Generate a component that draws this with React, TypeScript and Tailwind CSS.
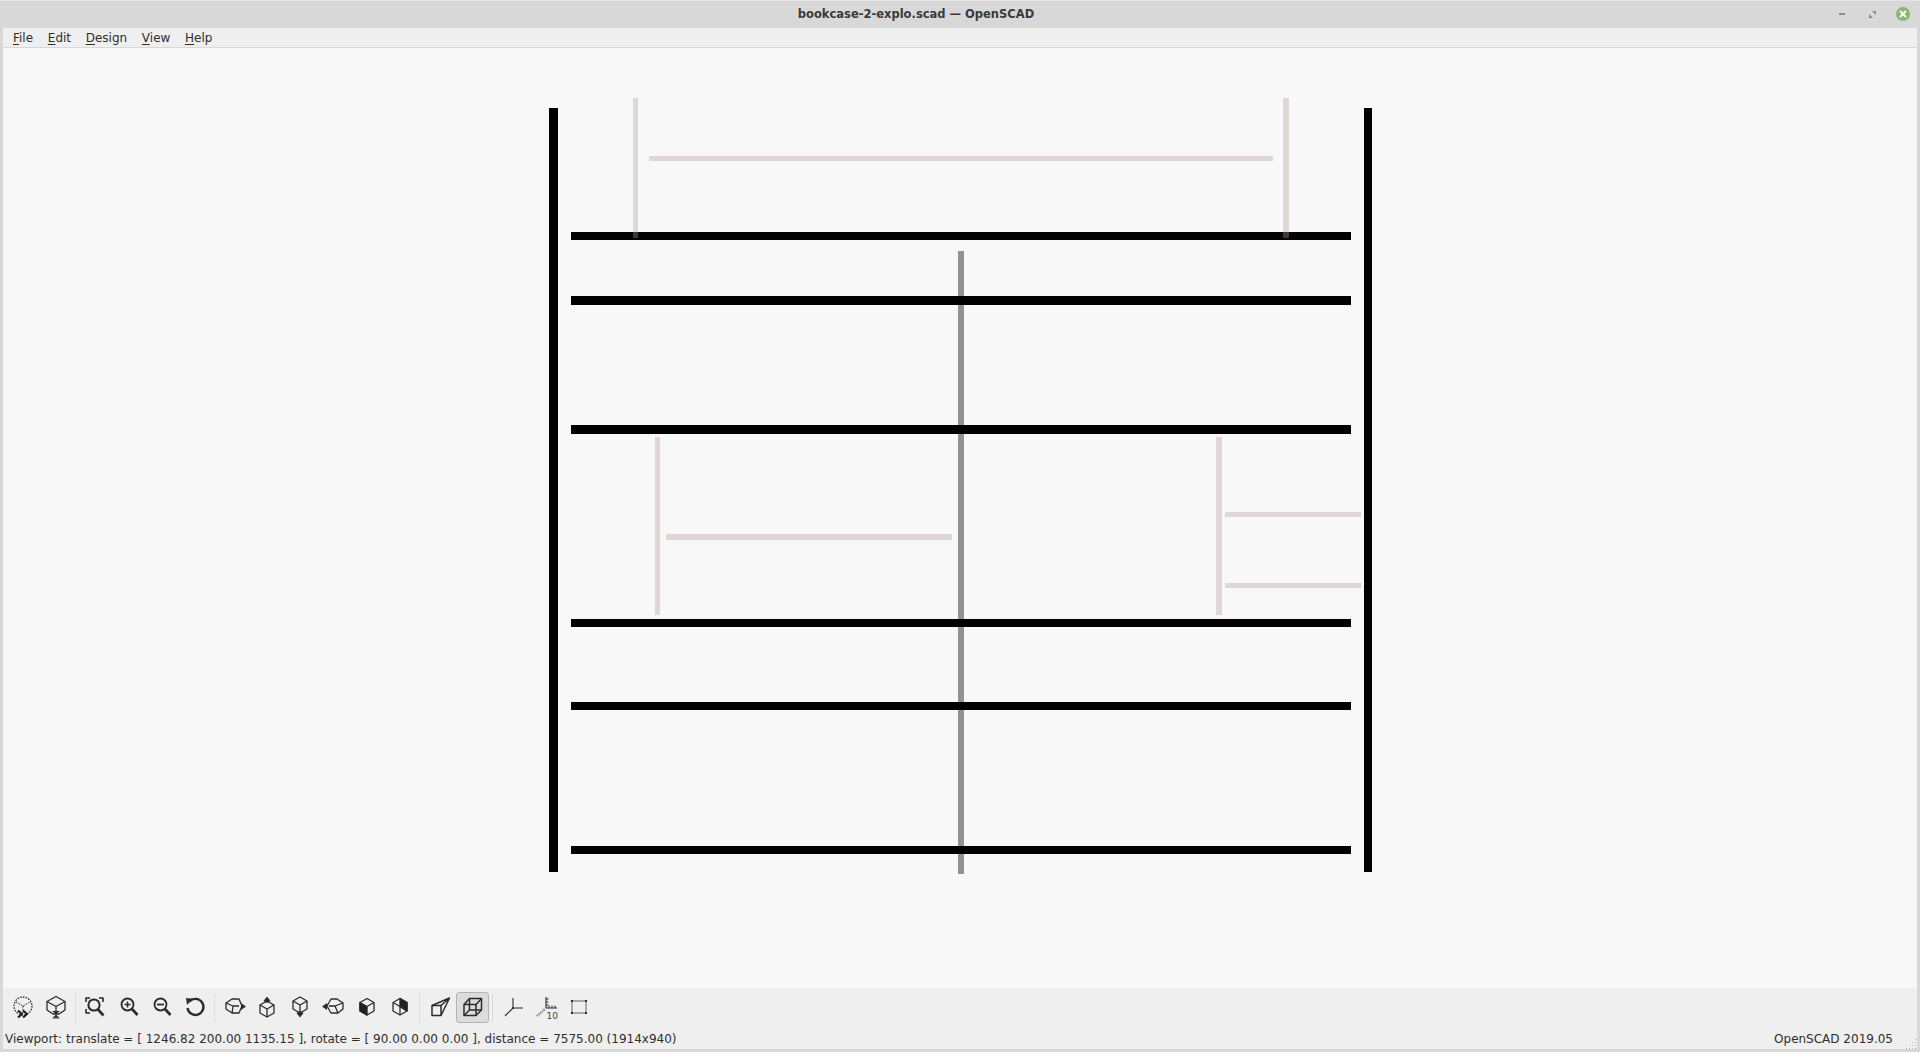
import type { ReactNode } from "react"

const font = "font-['DejaVu_Sans',sans-serif]"
const ink = "#2b2b2b"

const menus = [
  ["F", "ile"],
  ["E", "dit"],
  ["D", "esign"],
  ["V", "iew"],
  ["H", "elp"],
]

// rects of the model, in window coordinates
const parts = {
  grey: [[958, 251, 6, 623]],
  pink: [
    [633, 98, 5, 140],
    [1283, 98, 6, 140],
    [649, 156, 624, 5],
    [655, 437, 5, 178],
    [666, 534, 286, 6],
    [1216, 437, 6, 178],
    [1225, 512, 136, 5],
    [1225, 583, 136, 5],
  ],
  black: [
    [549, 108, 9, 764],
    [1364, 108, 8, 764],
    [571, 232, 780, 8],
    [571, 296, 780, 9],
    [571, 425, 780, 9],
    [571, 619, 780, 8],
    [571, 702, 780, 8],
    [571, 846, 780, 8],
  ],
  overlap: [
    [633, 232, 5, 6],
    [1283, 232, 6, 6],
  ],
}

function Rects({ items, fill }: { items: number[][]; fill: string }) {
  return (
    <>
      {items.map(([x, y, w, h]) => (
        <rect key={`${x}-${y}`} x={x} y={y} width={w} height={h} fill={fill} />
      ))}
    </>
  )
}

function Icon({ children }: { children: ReactNode }) {
  return (
    <svg width="24" height="24" viewBox="0 0 24 24" fill="none" stroke={ink} strokeWidth="1.3" strokeLinejoin="round">
      {children}
    </svg>
  )
}

const cube = "M12 3.5 19 7.5V16L12 20 5 16V7.5Z"

const icons: Record<string, ReactNode> = {
  preview: (
    <>
      <circle cx="12" cy="11" r="9" strokeDasharray="1.6 1.2" />
      <path d="M5 7 12 11 19 7M12 11V19" strokeDasharray="1.6 1.2" strokeWidth="1" />
      <path d="M7 15.5 11 19 7 22.5M12 15.5 16 19 12 22.5" strokeWidth="2.2" stroke="#222" />
    </>
  ),
  render: (
    <>
      <path d="M12 1.5 21 6.5V15L15 19H9L3 15V6.5Z" />
      <path d="M3 6.5 12 11.5 21 6.5M12 11.5V17" />
      <path d="M9 16.5H15L12 19.5 15 22.5H9L12 19.5Z" fill={ink} stroke="none" />
      <path d="M8.5 16.5H15.5M8.5 23H15.5" strokeWidth="1.2" />
    </>
  ),
  zoomAll: (
    <g transform="translate(-1 0)">
      <circle cx="11" cy="10" r="5.6" strokeWidth="2" />
      <path d="M15 14.5 20.5 20.5" strokeWidth="2.6" />
      <path d="M3 7V3H7M16 3H20V7M3 14V18H7" strokeWidth="1.6" />
    </g>
  ),
  zoomIn: (
    <>
      <circle cx="10.5" cy="9.5" r="6" strokeWidth="1.8" />
      <path d="M15 14 20.5 20" strokeWidth="2.6" />
      <path d="M7.5 9.5H13.5M10.5 6.5V12.5" strokeWidth="1.5" />
    </>
  ),
  zoomOut: (
    <>
      <circle cx="10.5" cy="9.5" r="6" strokeWidth="1.8" />
      <path d="M15 14 20.5 20" strokeWidth="2.6" />
      <path d="M7 9.5H14" strokeWidth="1.8" />
    </>
  ),
  reset: (
    <>
      <path d="M6.5 6.5A8 8 0 1 1 4.5 13" strokeWidth="2.4" />
      <path d="M3 3 10 3.8 4 10Z" fill={ink} stroke="none" />
    </>
  ),
  right: (
    <g transform="translate(-1 0)">
      <path d="M10 4H17L20 11 17 18H10L4 14V8Z" />
      <path d="M4 8 11 11 10 18M11 11H17" />
      <path d="M19 8 24 11.5 19 15Z" fill={ink} stroke="none" />
    </g>
  ),
  top: (
    <g transform="translate(-1 0)">
      <path d="M12 6 19 10V18L12 22 5 18V10Z" />
      <path d="M5 10 12 14 19 10M12 14V22" />
      <path d="M8.5 6 12 1.5 15.5 6 12 8Z" fill={ink} stroke="none" />
    </g>
  ),
  bottom: (
    <g transform="translate(-1 0)">
      <path d="M12 2 19 6V14L12 18 5 14V6Z" />
      <path d="M5 6 12 10 19 6M12 10V18" />
      <path d="M8.5 18 12 22.5 15.5 18 12 16Z" fill={ink} stroke="none" />
    </g>
  ),
  left: (
    <>
      <path d="M14 4H8L4 11 8 18H15L20 14V8Z" transform="translate(1 0)" />
      <path d="M6 11 12 11 20 8M12 11 15 18" transform="translate(1 0)" />
      <path d="M5 8 0 11.5 5 15Z" fill={ink} stroke="none" />
    </>
  ),
  front: (
    <>
      <path d={cube} />
      <path d="M5 7.5 12 11.5V20L5 16Z" fill="#222" stroke="#222" />
      <path d="M12 11.5 19 7.5" />
    </>
  ),
  back: (
    <>
      <path d={cube} />
      <path d="M12 3.5 19 7.5V16L12 11.5Z" fill="#222" stroke="#222" />
      <path d="M5 7.5 12 11.5V20M12 11.5 19 16" />
    </>
  ),
  perspective: (
    <g transform="translate(1 0)">
      <path d="M3 10.5H12V20.5H3Z" strokeWidth="1.5" />
      <path d="M3 10.5 20.5 3 12 10.5M20.5 3 12 20.5" strokeWidth="1.5" />
    </g>
  ),
  ortho: (
    <>
      <path d="M3 9.5H15V20.5H3Z" strokeWidth="1.5" />
      <path d="M8.5 3.5H20.5V15H8.5Z" strokeWidth="1.5" />
      <path d="M3 9.5 8.5 3.5M15 9.5 20.5 3.5M3 20.5 8.5 15M15 20.5 20.5 15" strokeWidth="1.5" />
    </>
  ),
  axes: (
    <>
      <path d="M12 13V3M12 13H22M12 13 4 21" strokeWidth="1.1" />
      <circle cx="12" cy="13" r="1" fill={ink} stroke="none" />
    </>
  ),
  scales: (
    <>
      <path d="M12 2V13H23" strokeWidth="1.1" />
      <path d="M12 4H14.5M12 7H14.5M12 10H14.5M15 13V10.5M18 13V10.5M21 13V10.5" strokeWidth="1" />
      <path d="M3 21 11 14" strokeWidth="2.2" strokeDasharray="1.2 1" stroke="#777" />
    </>
  ),
  edges: (
    <>
      <path d="M5 6H19M5 18H19M5 6V18M19 6V18" strokeWidth="1" stroke="#666" />
      <path d="M4 5h2v2H4zM18 5h2v2h-2zM4 17h2v2H4zM18 17h2v2h-2z" fill={ink} stroke="none" />
    </>
  ),
}

const toolbar = [
  ["preview", "render"],
  ["zoomAll", "zoomIn", "zoomOut", "reset"],
  ["right", "top", "bottom", "left", "front", "back"],
  ["perspective", "ortho"],
  ["axes", "scales", "edges"],
]

function ToolButton({ name }: { name: string }) {
  const active = name === "ortho"
  return (
    <div
      className={`flex h-[31px] w-[33px] items-center justify-center rounded-[3px] border pb-[2px] ${
        active ? "border-[#b4b4b4] bg-[#dcdcdc]" : "border-transparent"
      }`}
    >
      <Icon>
        {icons[name]}
        {name === "scales" && (
          <text x="12.5" y="23.5" fontSize="9" fill="#444" stroke="none" fontFamily="DejaVu Sans">
            10
          </text>
        )}
      </Icon>
    </div>
  )
}

function Grip() {
  const dots = [
    [9, 1],
    [6, 4],
    [9, 4],
    [3, 7],
    [6, 7],
    [9, 7],
    [0, 10],
    [3, 10],
    [6, 10],
    [9, 10],
  ]
  return (
    <svg width="11" height="11" viewBox="0 0 11 11" className="self-end">
      {dots.map(([x, y]) => (
        <rect key={`${x}-${y}`} x={x} y={y} width="1" height="1" fill="#b8b8b8" />
      ))}
    </svg>
  )
}

export default function App() {
  return (
    <div className={`flex h-screen w-full flex-col overflow-hidden bg-[#d8d8d8] text-[12px] text-[#2e2e2e] ${font}`}>
      {/* title bar */}
      <div className="flex h-[28px] shrink-0 items-center border-t border-[#e4e4e4]">
        <div className="flex-1 pr-[88px] pt-[1px] text-center text-[11.5px] font-bold text-[#3a3a3a]">
          bookcase-2-explo.scad — OpenSCAD
        </div>
      </div>
      <div className="absolute right-[10px] top-[7px] flex items-center gap-[15px]">
        <div className="h-[2px] w-[6px] bg-[#8a8a8a]" />
        <svg width="7" height="7" viewBox="0 0 7 7" className="ml-[9px]">
          <path d="M0 7V3L4 7ZM7 0V4L3 0Z" fill="#8a8a8a" />
        </svg>
        <div className="ml-[5px] flex h-[14px] w-[14px] items-center justify-center rounded-full bg-[#8fb56d]">
          <svg width="8" height="8" viewBox="0 0 8 8">
            <path d="M1 1 7 7M7 1 1 7" stroke="#fff" strokeWidth="1.8" />
          </svg>
        </div>
      </div>

      <div className="mx-[3px] flex min-h-0 flex-1 flex-col">
        {/* menu bar */}
        <div className="flex h-[20px] shrink-0 items-center gap-[14.7px] border-b border-[#d8d8d8] bg-[#efefef] pl-[10px]">
          {menus.map(([key, rest]) => (
            <span key={key}>
              <span className="underline underline-offset-2">{key}</span>
              {rest}
            </span>
          ))}
        </div>

        {/* 3d view */}
        <svg viewBox="3 48 1914 940" className="h-[940px] w-[1914px] shrink-0 bg-[#f8f8f8]">
          <Rects items={parts.grey} fill="#929292" />
          <Rects items={parts.pink} fill="#e0d6d6" />
          <Rects items={parts.black} fill="#000000" />
          <Rects items={parts.overlap} fill="#3d3737" />
        </svg>

        {/* toolbar */}
        <div className="flex h-[40px] shrink-0 items-start bg-[#efefef] pl-[3px] pt-[4px]">
          {toolbar.map((group, i) => (
            <div key={group[0]} className="flex items-center">
              {i > 0 && <div className="mx-[3px] h-[28px] w-px bg-[#dcdcdc]" />}
              {group.map((name) => (
                <ToolButton key={name} name={name} />
              ))}
            </div>
          ))}
        </div>

        {/* status bar */}
        <div className="flex h-[21px] shrink-0 items-center justify-between bg-[#efefef] pl-[2px]">
          <span>Viewport: translate = [ 1246.82 200.00 1135.15 ], rotate = [ 90.00 0.00 0.00 ], distance = 7575.00 (1914x940)</span>
          <div className="flex h-full items-center gap-[13px]">
            <span>OpenSCAD 2019.05</span>
            <Grip />
          </div>
        </div>
      </div>
      <div className="h-[3px] shrink-0" />
    </div>
  )
}
